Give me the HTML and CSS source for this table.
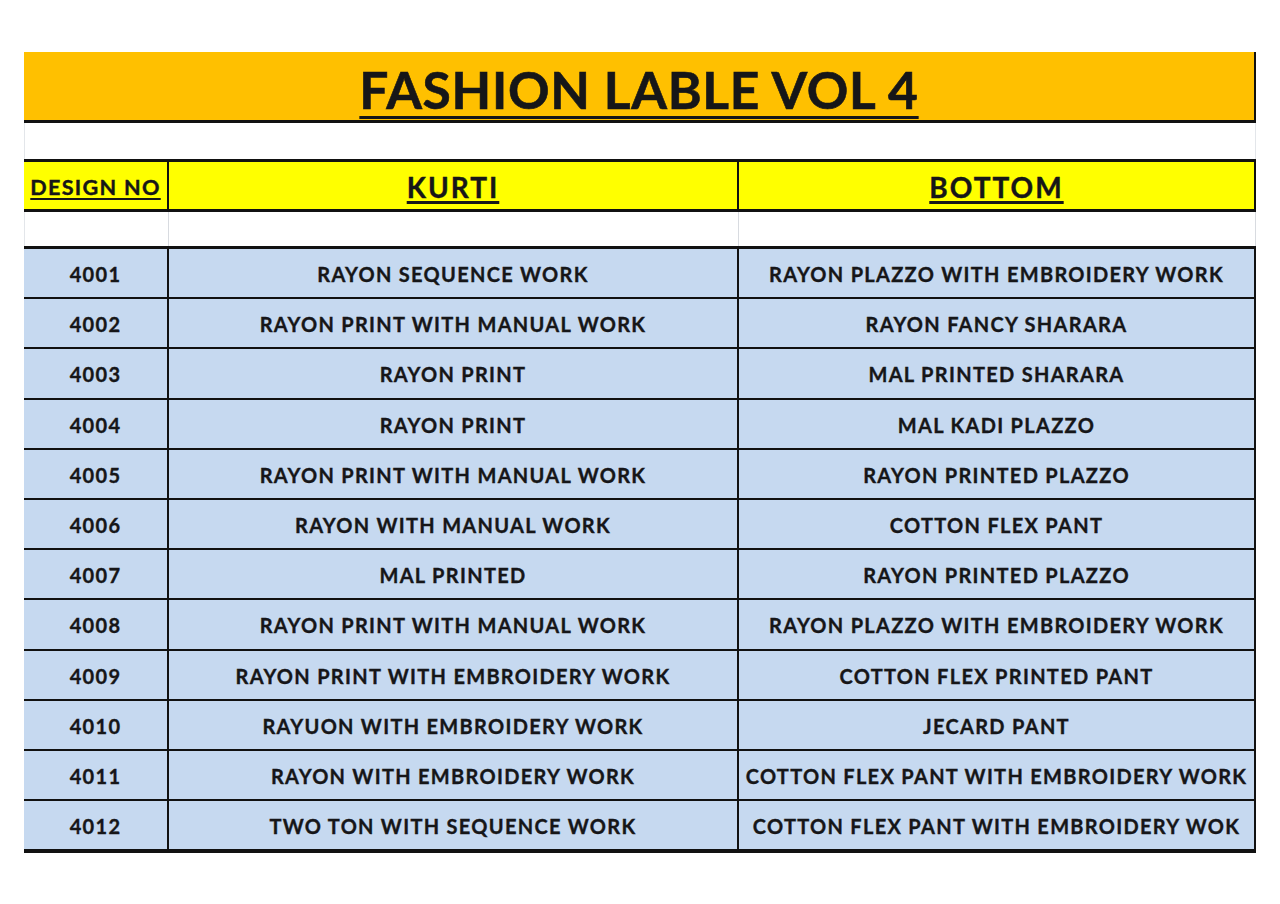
FILE: index.html
```html
<!DOCTYPE html>
<html>
<head>
<meta charset="utf-8">
<link rel="stylesheet" href="styles.css">
</head>
<body>
<div class="sheet">
  <div class="title"><span>FASHION LABLE VOL 4</span></div>
  <div class="gap"></div>
  <div class="row head">
    <div class="cell c1"><span>DESIGN NO</span></div>
    <div class="cell c2"><span>KURTI</span></div>
    <div class="cell c3"><span>BOTTOM</span></div>
  </div>
  <div class="row blank">
    <div class="cell"></div>
    <div class="cell"></div>
    <div class="cell"></div>
  </div>
  <div class="data">
    <div class="row"><div class="cell">4001</div><div class="cell">RAYON SEQUENCE WORK</div><div class="cell">RAYON PLAZZO WITH EMBROIDERY WORK</div></div>
    <div class="row"><div class="cell">4002</div><div class="cell">RAYON PRINT WITH MANUAL WORK</div><div class="cell">RAYON FANCY SHARARA</div></div>
    <div class="row"><div class="cell">4003</div><div class="cell">RAYON PRINT</div><div class="cell">MAL PRINTED SHARARA</div></div>
    <div class="row"><div class="cell">4004</div><div class="cell">RAYON PRINT</div><div class="cell">MAL KADI PLAZZO</div></div>
    <div class="row"><div class="cell">4005</div><div class="cell">RAYON PRINT WITH MANUAL WORK</div><div class="cell">RAYON PRINTED PLAZZO</div></div>
    <div class="row"><div class="cell">4006</div><div class="cell">RAYON WITH MANUAL WORK</div><div class="cell">COTTON FLEX PANT</div></div>
    <div class="row"><div class="cell">4007</div><div class="cell">MAL PRINTED</div><div class="cell">RAYON PRINTED PLAZZO</div></div>
    <div class="row"><div class="cell">4008</div><div class="cell">RAYON PRINT WITH MANUAL WORK</div><div class="cell">RAYON PLAZZO WITH EMBROIDERY WORK</div></div>
    <div class="row"><div class="cell">4009</div><div class="cell">RAYON PRINT WITH EMBROIDERY WORK</div><div class="cell">COTTON FLEX PRINTED PANT</div></div>
    <div class="row"><div class="cell">4010</div><div class="cell">RAYUON WITH EMBROIDERY WORK</div><div class="cell">JECARD PANT</div></div>
    <div class="row"><div class="cell">4011</div><div class="cell">RAYON WITH EMBROIDERY WORK</div><div class="cell">COTTON FLEX PANT WITH EMBROIDERY WORK</div></div>
    <div class="row"><div class="cell">4012</div><div class="cell">TWO TON WITH SEQUENCE WORK</div><div class="cell">COTTON FLEX PANT WITH EMBROIDERY WOK</div></div>
  </div>
</div>
</body>
</html>
```

FILE: styles.css
```css
* { box-sizing: border-box; }
html, body { margin: 0; padding: 0; background: #ffffff; }
body {
  font-family: "Lato", "Open Sans", sans-serif;
  font-weight: 700;
  color: #161618;
}
.sheet {
  margin: 52px 0 0 24px;
  width: 1232px;
}
.title {
  height: 71px;
  background: #ffc000;
  border-bottom: 3px solid #111;
  border-right: 2px solid #111;
  display: flex;
  justify-content: center;
  align-items: flex-end;
  padding-bottom: 5px;
}
.title span {
  font-size: 51.5px;
  letter-spacing: 0.7px;
  line-height: 1;
  -webkit-text-stroke: 0.6px #161618;
  text-decoration: underline;
  text-decoration-thickness: 3px;
  text-underline-offset: 7px;
}
.gap {
  height: 36px;
  border-left: 1px solid #e3e6ea;
  border-right: 1px solid #e3e6ea;
}
.row {
  display: grid;
  grid-template-columns: 145px 570px 517px;
}
.cell {
  border-right: 2px solid #111;
  display: flex;
  align-items: center;
  justify-content: center;
  white-space: nowrap;
}
.head {
  height: 53px;
  border-top: 3px solid #111;
  border-bottom: 3px solid #111;
  background: #ffff00;
}
.head .cell span {
  line-height: 1;
  -webkit-text-stroke: 0.4px #161618;
  text-decoration: underline;
}
.head .c1 {
  font-size: 21.6px;
  letter-spacing: 1.3px;
  padding-top: 5px;
}
.head .c1 span {
  text-decoration-thickness: 2px;
  text-underline-offset: 3px;
}
.head .c2, .head .c3 {
  font-size: 28px;
  letter-spacing: 2px;
  padding-top: 2px;
}
.head .c2 span, .head .c3 span {
  text-decoration-thickness: 2.5px;
  text-underline-offset: 3px;
}
.blank { height: 34px; }
.blank .cell { border-right: 1px solid #d8dbe0; }
.blank .cell:first-child { border-left: 1px solid #e3e6ea; }
.data {
  border-top: 3px solid #111;
  border-bottom: 4px solid #111;
  background: #c6d9f0;
}
.data .row {
  height: 50.2px;
  border-bottom: 2px solid #111;
}
.data .row:last-child {
  height: 48.2px;
  border-bottom: none;
}
.data .cell {
  font-size: 20px;
  letter-spacing: 1.3px;
  line-height: 1.2;
  padding-top: 2px;
  -webkit-text-stroke: 0.35px #161618;
}
```
